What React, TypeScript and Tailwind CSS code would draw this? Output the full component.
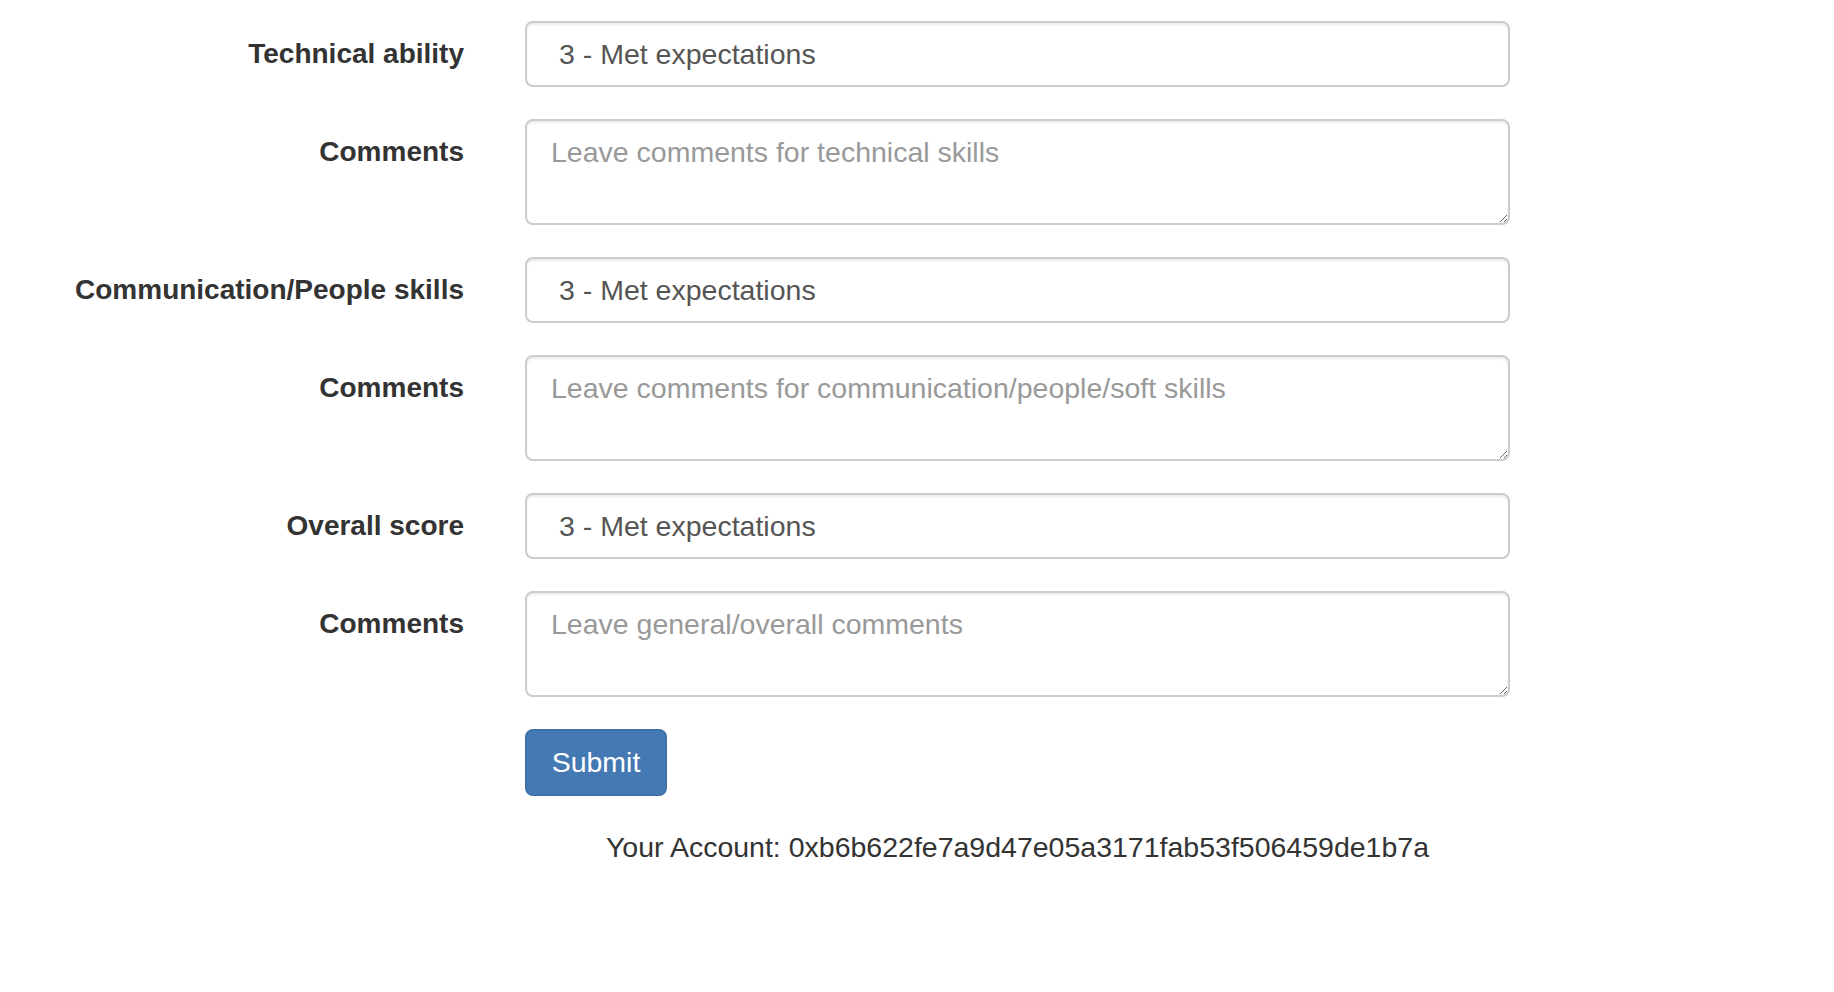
import React from 'react';

const FONT = { fontFamily: '"Liberation Sans", Arial, Helvetica, sans-serif' };

const OPTIONS = [
  '1 - Did not meet expectations',
  '2 - Partially met expectations',
  '3 - Met expectations',
  '4 - Exceeded expectations',
  '5 - Far exceeded expectations',
];

function Row({ label, children }: { label: string; children: React.ReactNode }) {
  return (
    <div className="flex items-start gap-[61px]">
      <label className="w-[464px] shrink-0 text-right font-bold text-[#333] text-[28px] leading-[66px]">
        {label}
      </label>
      <div className="w-[985px] shrink-0">{children}</div>
    </div>
  );
}

function ScoreSelect() {
  return (
    <select
      defaultValue={OPTIONS[2]}
      className="block w-full h-[66px] appearance-none bg-white border-2 border-[#ccc] rounded-[8px] pl-[32px] pr-6 text-[28.5px] text-[#555] shadow-[inset_0_2px_2px_rgba(0,0,0,0.075)] outline-none"
      style={FONT}
    >
      {OPTIONS.map((o) => (
        <option key={o}>{o}</option>
      ))}
    </select>
  );
}

function Comments({ placeholder }: { placeholder: string }) {
  return (
    <textarea
      placeholder={placeholder}
      className="block w-full h-[106px] bg-white border-2 border-[#ccc] rounded-[8px] px-[24px] pt-[12px] text-[28.5px] leading-[38px] text-[#555] placeholder:text-[#999] shadow-[inset_0_2px_2px_rgba(0,0,0,0.075)] outline-none"
      style={FONT}
    />
  );
}

export default function App() {
  return (
    <div className="min-h-screen bg-white pt-[21px]" style={FONT}>
      <form className="flex flex-col gap-[32px]" onSubmit={(e) => e.preventDefault()}>
        <Row label="Technical ability">
          <ScoreSelect />
        </Row>
        <Row label="Comments">
          <Comments placeholder="Leave comments for technical skills" />
        </Row>
        <Row label="Communication/People skills">
          <ScoreSelect />
        </Row>
        <Row label="Comments">
          <Comments placeholder="Leave comments for communication/people/soft skills" />
        </Row>
        <Row label="Overall score">
          <ScoreSelect />
        </Row>
        <Row label="Comments">
          <Comments placeholder="Leave general/overall comments" />
        </Row>
        <div className="flex gap-[61px]">
          <div className="w-[464px] shrink-0" />
          <button
            type="submit"
            className="h-[67px] w-[142px] rounded-[8px] bg-[#4579b3] border-2 border-[#3f70a8] text-white text-[28.5px]"
            style={FONT}
          >
            Submit
          </button>
        </div>
      </form>
      <div className="flex gap-[61px] mt-[32px]">
        <div className="w-[464px] shrink-0" />
        <p className="w-[985px] text-center text-[28.5px] leading-[38px] text-[#333]">
          Your Account: 0xb6b622fe7a9d47e05a3171fab53f506459de1b7a
        </p>
      </div>
    </div>
  );
}
